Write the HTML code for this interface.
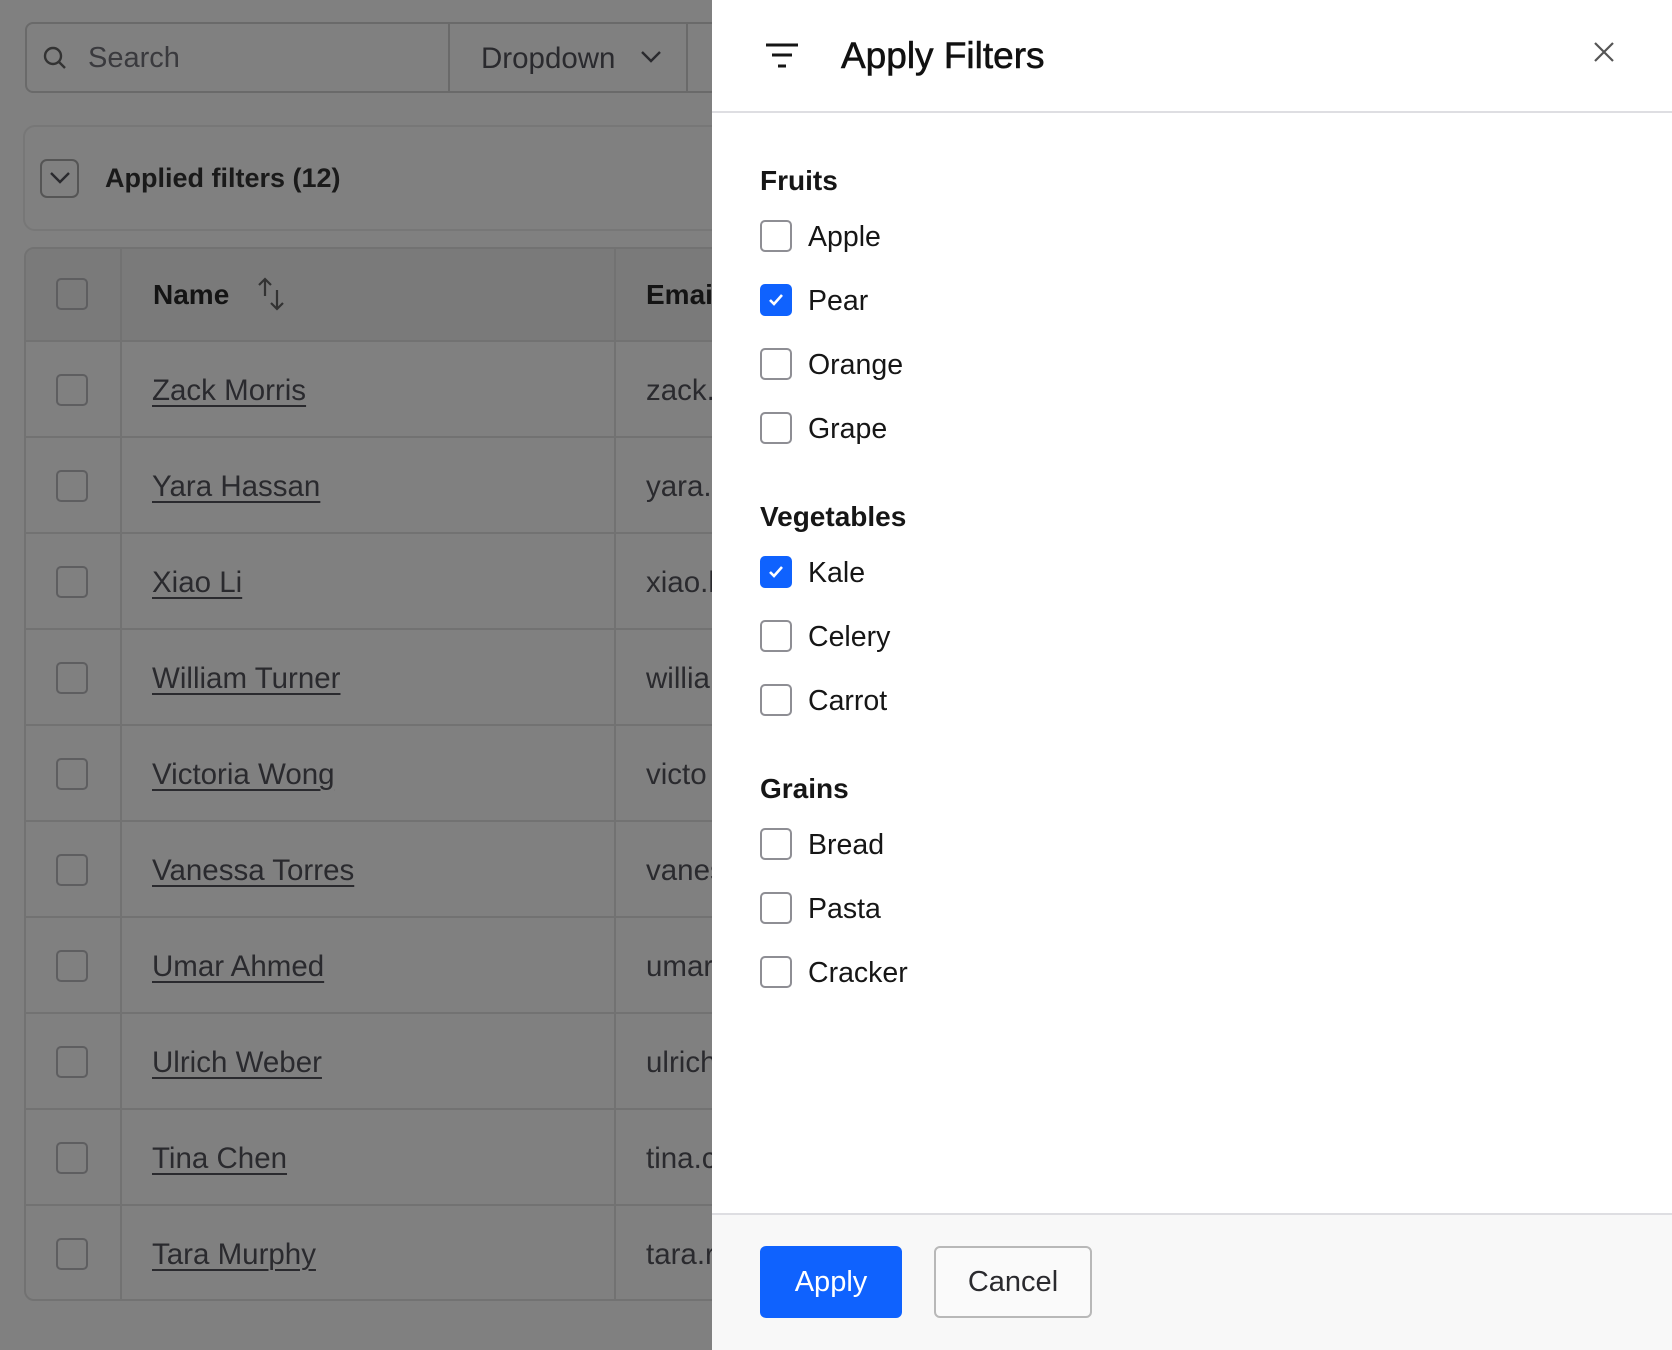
<!DOCTYPE html>
<html><head><style>
*{box-sizing:border-box;margin:0;padding:0}
body{width:1672px;height:1350px;overflow:hidden;background:#808080;font-family:"Liberation Sans",sans-serif;position:relative;color:#222}
.a{position:absolute}
.cb{position:absolute;width:32px;height:32px;border:2px solid #5e5e60;border-radius:5px}
.row{position:absolute;left:25px;width:700px;height:96px;border-top:2px solid #727272}
.nm{position:absolute;left:152px;font-size:29.5px;color:#2a2a2e;text-decoration:underline;text-underline-offset:5px;text-decoration-thickness:2px}
.em{position:absolute;left:646px;font-size:29.5px;color:#2a2a2e}
.panel{position:absolute;left:712px;top:0;width:960px;height:1350px;background:#fff}
.pcb{position:absolute;left:48px;width:32px;height:32px;border:2px solid #8e8e94;border-radius:5px;background:#fff}
.pcb.on{background:#0f62fe;border-color:#0f62fe}
.lab{position:absolute;left:96px;font-size:28.5px;color:#161616;line-height:32px;top:1px}
.sec{position:absolute;left:48px;font-size:28px;font-weight:bold;color:#161616;line-height:32px}
</style></head><body>
<div class="a" style="left:25px;top:22px;width:720px;height:71px;border:2px solid #6a6a6a;border-radius:8px"></div>
<div class="a" style="left:448px;top:22px;width:2px;height:71px;background:#6a6a6a"></div>
<div class="a" style="left:686px;top:22px;width:2px;height:71px;background:#6a6a6a"></div>
<svg class="a" style="left:42px;top:45px" width="26" height="26" viewBox="0 0 26 26"><circle cx="11" cy="11" r="8" fill="none" stroke="#333" stroke-width="2.4"/><path d="M17 17l6 6" stroke="#333" stroke-width="2.4"/></svg>
<div class="a" style="left:88px;top:42px;font-size:29px;color:#3a3a3e">Search</div>
<div class="a" style="left:481px;top:42px;font-size:29.5px;color:#2a2a2e">Dropdown</div>
<svg class="a" style="left:640px;top:50px" width="22" height="14" viewBox="0 0 22 14"><path d="M2 2l9 9 9-9" fill="none" stroke="#2a2a2e" stroke-width="2.4"/></svg>
<div class="a" style="left:23px;top:125px;width:720px;height:106px;border:2px solid #777;border-radius:12px"></div>
<div class="a" style="left:40px;top:159px;width:39px;height:39px;border:2px solid #555;border-radius:7px"></div>
<svg class="a" style="left:49px;top:171px" width="22" height="14" viewBox="0 0 22 14"><path d="M2 2l9 9 9-9" fill="none" stroke="#2a2a2e" stroke-width="2.4"/></svg>
<div class="a" style="left:105px;top:163px;font-size:27px;font-weight:bold;color:#1a1a1a">Applied filters (12)</div>
<div class="a" style="left:24px;top:247px;width:720px;height:1054px;border:2px solid #727272;border-radius:10px"></div>
<div class="a" style="left:26px;top:249px;width:700px;height:92px;background:#7a7a7a;border-radius:8px 0 0 0"></div>
<div class="a" style="left:120px;top:247px;width:2px;height:1054px;background:#727272"></div>
<div class="a" style="left:614px;top:247px;width:2px;height:1054px;background:#727272"></div>
<div class="cb" style="left:56px;top:278px"></div>
<div class="a" style="left:153px;top:279px;font-size:28px;font-weight:bold;color:#141414">Name</div>
<svg class="a" style="left:256px;top:276px" width="32" height="36" viewBox="0 0 32 36"><path d="M9 20V3M3 9l6-6 6 6M21 14v19M15 27l6 6 6-6" fill="none" stroke="#333" stroke-width="2.2"/></svg>
<div class="a" style="left:646px;top:279px;font-size:28px;font-weight:bold;color:#141414">Emai</div>
<div class="row" style="top:340px"></div><div class="cb" style="left:56px;top:374px"></div><div class="nm" style="top:374px">Zack Morris</div><div class="em" style="top:374px">zack.</div>
<div class="row" style="top:436px"></div><div class="cb" style="left:56px;top:470px"></div><div class="nm" style="top:470px">Yara Hassan</div><div class="em" style="top:470px">yara.</div>
<div class="row" style="top:532px"></div><div class="cb" style="left:56px;top:566px"></div><div class="nm" style="top:566px">Xiao Li</div><div class="em" style="top:566px">xiao.l</div>
<div class="row" style="top:628px"></div><div class="cb" style="left:56px;top:662px"></div><div class="nm" style="top:662px">William Turner</div><div class="em" style="top:662px">willia</div>
<div class="row" style="top:724px"></div><div class="cb" style="left:56px;top:758px"></div><div class="nm" style="top:758px">Victoria Wong</div><div class="em" style="top:758px">victo</div>
<div class="row" style="top:820px"></div><div class="cb" style="left:56px;top:854px"></div><div class="nm" style="top:854px">Vanessa Torres</div><div class="em" style="top:854px">vanes</div>
<div class="row" style="top:916px"></div><div class="cb" style="left:56px;top:950px"></div><div class="nm" style="top:950px">Umar Ahmed</div><div class="em" style="top:950px">umar</div>
<div class="row" style="top:1012px"></div><div class="cb" style="left:56px;top:1046px"></div><div class="nm" style="top:1046px">Ulrich Weber</div><div class="em" style="top:1046px">ulrich</div>
<div class="row" style="top:1108px"></div><div class="cb" style="left:56px;top:1142px"></div><div class="nm" style="top:1142px">Tina Chen</div><div class="em" style="top:1142px">tina.c</div>
<div class="row" style="top:1204px;height:96px"></div><div class="cb" style="left:56px;top:1238px"></div><div class="nm" style="top:1238px">Tara Murphy</div><div class="em" style="top:1238px">tara.r</div>

<div class="panel">
 <svg class="a" style="left:52px;top:42px" width="36" height="28" viewBox="0 0 36 28"><path d="M2 3h32M8 13h20M14 24h8" stroke="#161616" stroke-width="3"/></svg>
 <div class="a" style="left:129px;top:34px;font-size:37px;color:#111;line-height:44px;-webkit-text-stroke:0.6px #111">Apply Filters</div>
 <svg class="a" style="left:881px;top:41px" width="22" height="22" viewBox="0 0 22 22"><path d="M2 2l18 18M20 2L2 20" stroke="#555" stroke-width="2.2"/></svg>
 <div class="a" style="left:0;top:111px;width:960px;height:2px;background:#dedee2"></div>

 <div class="sec" style="top:165px">Fruits</div>
 <div class="pcb" style="top:220px"></div><div class="lab" style="margin-top:220px">Apple</div>
 <div class="pcb on" style="top:284px"><svg width="28" height="28" viewBox="0 0 28 28"><path d="M8 14l4 4 8-9" fill="none" stroke="#fff" stroke-width="2.6"/></svg></div><div class="lab" style="margin-top:284px">Pear</div>
 <div class="pcb" style="top:348px"></div><div class="lab" style="margin-top:348px">Orange</div>
 <div class="pcb" style="top:412px"></div><div class="lab" style="margin-top:412px">Grape</div>

 <div class="sec" style="top:501px">Vegetables</div>
 <div class="pcb on" style="top:556px"><svg width="28" height="28" viewBox="0 0 28 28"><path d="M8 14l4 4 8-9" fill="none" stroke="#fff" stroke-width="2.6"/></svg></div><div class="lab" style="margin-top:556px">Kale</div>
 <div class="pcb" style="top:620px"></div><div class="lab" style="margin-top:620px">Celery</div>
 <div class="pcb" style="top:684px"></div><div class="lab" style="margin-top:684px">Carrot</div>

 <div class="sec" style="top:773px">Grains</div>
 <div class="pcb" style="top:828px"></div><div class="lab" style="margin-top:828px">Bread</div>
 <div class="pcb" style="top:892px"></div><div class="lab" style="margin-top:892px">Pasta</div>
 <div class="pcb" style="top:956px"></div><div class="lab" style="margin-top:956px">Cracker</div>

 <div class="a" style="left:0;top:1213px;width:960px;height:137px;background:#f8f8f8;border-top:2px solid #dedee2"></div>
 <div class="a" style="left:48px;top:1246px;width:142px;height:72px;background:#0f62fe;border-radius:6px;color:#fff;font-size:29px;line-height:72px;text-align:center">Apply</div>
 <div class="a" style="left:222px;top:1246px;width:158px;height:72px;background:#fafafa;border:2px solid #b8b8b8;border-radius:6px;color:#2a2a2e;font-size:29px;line-height:68px;text-align:center">Cancel</div>
</div>
</body></html>
